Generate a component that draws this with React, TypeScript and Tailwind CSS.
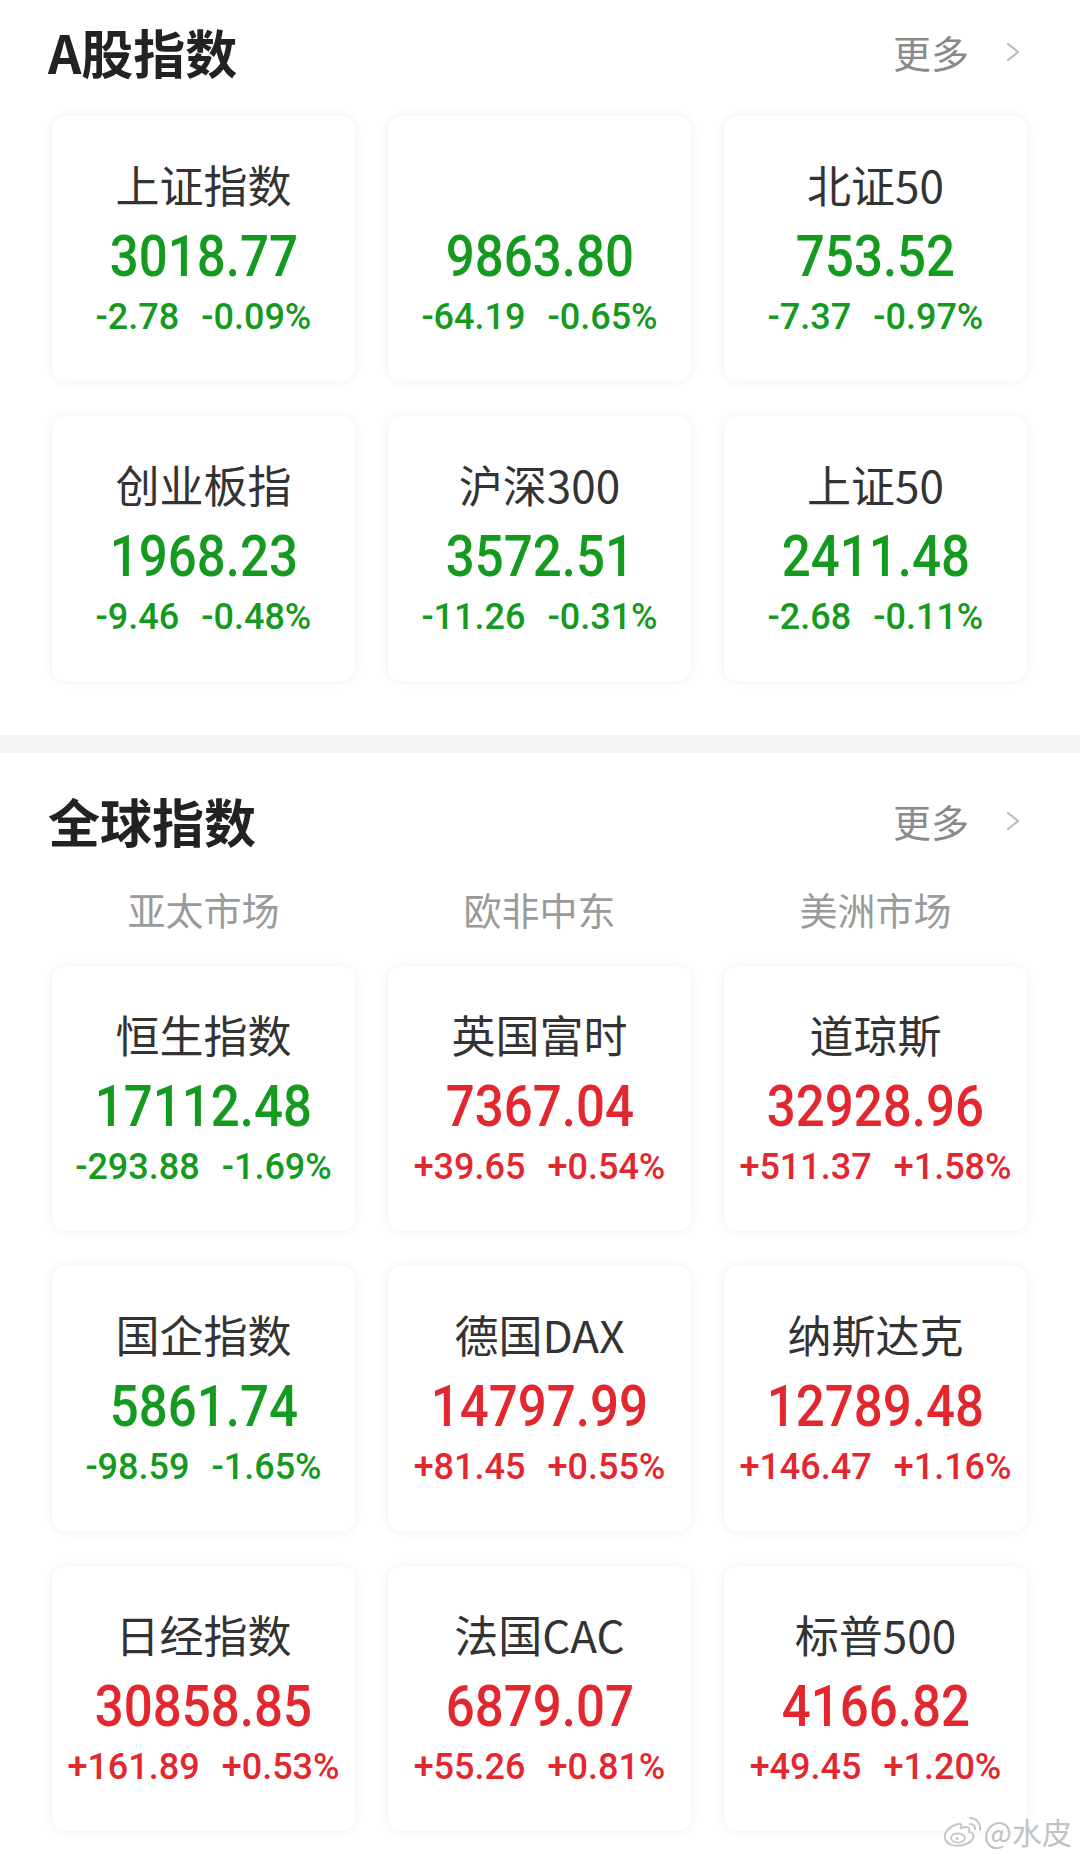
import React from "react";

type Quote = { name: string; value: string; change: string; pct: string };

const aShares: Quote[] = [
  { name: "上证指数", value: "3018.77", change: "-2.78", pct: "-0.09%" },
  { name: "", value: "9863.80", change: "-64.19", pct: "-0.65%" },
  { name: "北证50", value: "753.52", change: "-7.37", pct: "-0.97%" },
  { name: "创业板指", value: "1968.23", change: "-9.46", pct: "-0.48%" },
  { name: "沪深300", value: "3572.51", change: "-11.26", pct: "-0.31%" },
  { name: "上证50", value: "2411.48", change: "-2.68", pct: "-0.11%" },
];

const globalIdx: Quote[] = [
  { name: "恒生指数", value: "17112.48", change: "-293.88", pct: "-1.69%" },
  { name: "英国富时", value: "7367.04", change: "+39.65", pct: "+0.54%" },
  { name: "道琼斯", value: "32928.96", change: "+511.37", pct: "+1.58%" },
  { name: "国企指数", value: "5861.74", change: "-98.59", pct: "-1.65%" },
  { name: "德国DAX", value: "14797.99", change: "+81.45", pct: "+0.55%" },
  { name: "纳斯达克", value: "12789.48", change: "+146.47", pct: "+1.16%" },
  { name: "日经指数", value: "30858.85", change: "+161.89", pct: "+0.53%" },
  { name: "法国CAC", value: "6879.07", change: "+55.26", pct: "+0.81%" },
  { name: "标普500", value: "4166.82", change: "+49.45", pct: "+1.20%" },
];

function Header({ title }: { title: string }) {
  return (
    <div className="flex flex-row items-center justify-between h-[56px] pl-[48px] pr-[60px]">
      <h1 className="text-[52px] leading-[56px] font-bold text-[#222]">{title}</h1>
      <div className="flex flex-row items-center gap-[37px]">
        <span className="text-[38px] leading-[56px] text-[#8a8a8a]">更多</span>
        <svg width="14" height="20" viewBox="0 0 14 20" fill="none">
          <path d="M2 2 L12 10 L2 18" stroke="#bdbdbd" strokeWidth="2.2" strokeLinecap="round" strokeLinejoin="round" />
        </svg>
      </div>
    </div>
  );
}

function Card({ q }: { q: Quote }) {
  const up = q.change.startsWith("+");
  const color = up ? "text-[#e3272f]" : "text-[#139a1f]";
  return (
    <div className="h-[265px] bg-white rounded-[14px] shadow-[0_0_12px_rgba(0,0,0,0.07)] flex flex-col items-center pt-[40px]">
      <div className="h-[56px] text-[44px] leading-[56px] text-[#333]">{q.name || "\u00a0"}</div>
      <div className={`mt-[12px] h-[64px] text-[58px] leading-[64px] font-medium font-['Roboto',sans-serif] scale-x-[0.88] ${color}`}>
        {q.value}
      </div>
      <div className={`mt-[9px] h-[40px] flex flex-row gap-[22px] text-[36px] leading-[40px] font-medium font-['Roboto',sans-serif] ${color}`}>
        <span>{q.change}</span>
        <span>{q.pct}</span>
      </div>
    </div>
  );
}

function Weibo() {
  return (
    <svg width="40" height="34" viewBox="0 0 40 34" fill="none">
      <path
        d="M16 10 C8 12 2 18 3 24 C4 31 14 33 21 31 C29 29 33 24 31 20 C30 18 28 18 27 18 C28 15 27 13 24 13 C22 13 20 14 19 14 C20 11 19 9 16 10 Z"
        stroke="#c6c6c6"
        strokeWidth="2"
        fill="#fff"
      />
      <ellipse cx="16" cy="24" rx="7" ry="4.5" stroke="#c6c6c6" strokeWidth="1.8" />
      <circle cx="15" cy="24.5" r="1.6" fill="#c6c6c6" />
      <path d="M28 10 C31 10 33 12 33 15" stroke="#c6c6c6" strokeWidth="2" strokeLinecap="round" />
      <path d="M28 4 C34 4 39 9 38 16" stroke="#c6c6c6" strokeWidth="2" strokeLinecap="round" />
    </svg>
  );
}

export default function App() {
  return (
    <div className="relative w-[1080px] min-h-[1860px] bg-white font-['Noto_Sans_CJK_SC','Noto_Sans',sans-serif]">
      <section className="pt-[24px]">
        <Header title="A股指数" />
        <div className="grid grid-cols-3 gap-x-[33px] gap-y-[35px] pl-[52px] pr-[53px] mt-[36px]">
          {aShares.map((q, i) => (
            <Card key={i} q={q} />
          ))}
        </div>
      </section>

      <div className="mt-[54px] h-[18px] bg-[#f5f5f5]" />

      <section className="pt-[40px]">
        <Header title="全球指数" />
        <div className="grid grid-cols-3 gap-x-[33px] pl-[52px] pr-[53px] mt-[38px]">
          {["亚太市场", "欧非中东", "美洲市场"].map((t) => (
            <div key={t} className="text-center text-[38px] leading-[44px] text-[#9a9a9a]">
              {t}
            </div>
          ))}
        </div>
        <div className="grid grid-cols-3 gap-x-[33px] gap-y-[35px] pl-[52px] pr-[53px] mt-[35px]">
          {globalIdx.map((q, i) => (
            <Card key={i} q={q} />
          ))}
        </div>
      </section>

      <div className="absolute right-[8px] bottom-[12px] flex flex-row items-center gap-[2px]">
        <Weibo />
        <span className="text-[30px] leading-[34px] text-[#c2c2c2]">@水皮</span>
      </div>
    </div>
  );
}
